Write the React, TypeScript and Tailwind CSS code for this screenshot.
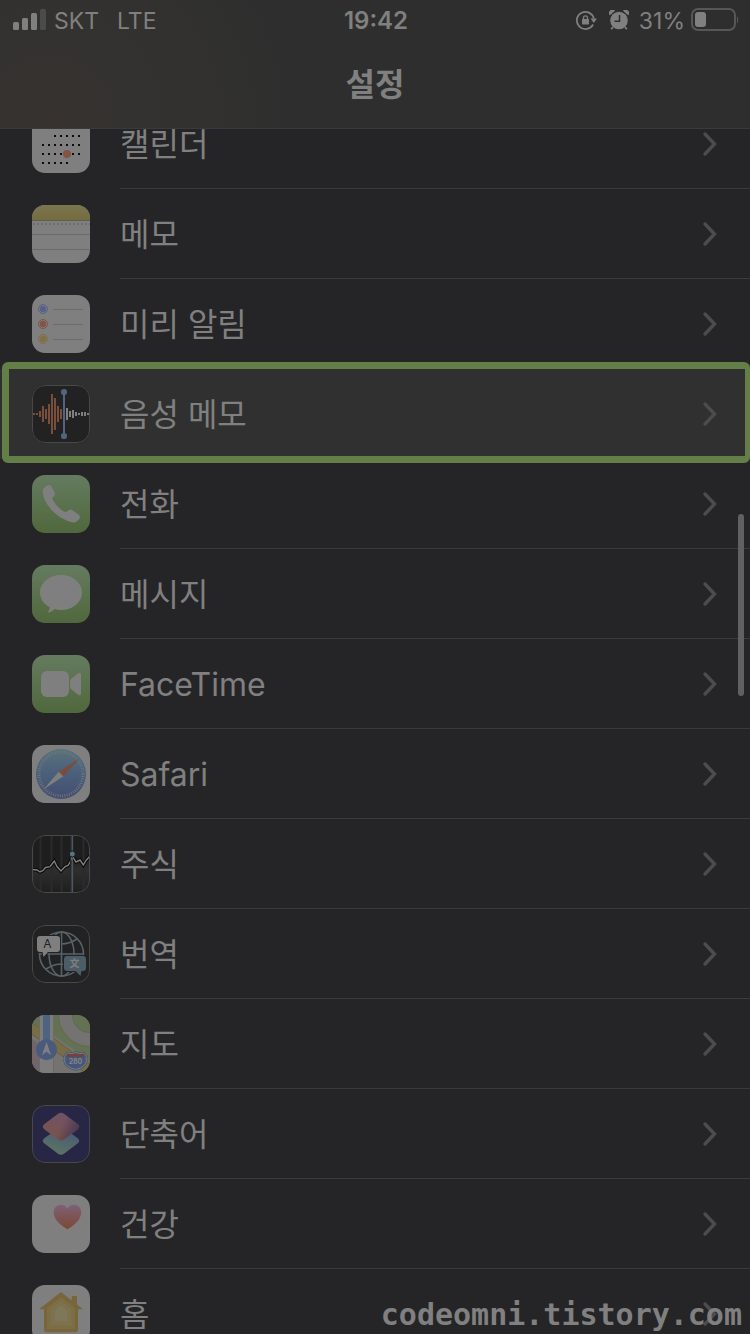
import React from "react";

interface SettingsItem {
  id: string;
  label: string;
  icon: React.ReactNode;
  highlighted?: boolean;
}

interface TileProps {
  fill: string;
  outlined?: boolean;
  children: React.ReactNode;
}

// Rounded app tile, all artwork is drawn on a 58x58 grid
const Tile = ({ fill, outlined, children }: TileProps) => (
  <svg viewBox="0 0 58 58" className="size-[58px] shrink-0 rounded-[13px]" aria-hidden="true">
    <defs>
      <linearGradient id="green" x1="0" y1="0" x2="0" y2="1">
        <stop offset="0" stopColor="#657d5f" />
        <stop offset="1" stopColor="#506b3b" />
      </linearGradient>
      <linearGradient id="greenTile" gradientUnits="userSpaceOnUse" x1="0" y1="0" x2="0" y2="58">
        <stop offset="0" stopColor="#657b60" />
        <stop offset="1" stopColor="#50683c" />
      </linearGradient>
    </defs>
    <rect width="58" height="58" fill={fill} />
    {children}
    {outlined && (
      <rect x="0.5" y="0.5" width="57" height="57" rx="12.5" fill="none" stroke="#484848" />
    )}
  </svg>
);

const CalendarIcon = () => {
  const rows = [
    { y: 21, xs: [23, 29, 35, 41, 47] },
    { y: 30, xs: [11, 17, 23, 29, 35, 41, 47] },
    { y: 39, xs: [11, 17, 23, 29, 41, 47] },
    { y: 48, xs: [11, 17, 23, 29, 35] },
  ];
  return (
    <Tile fill="#7f7f7f">
      {rows.map((row) =>
        row.xs.map((x) => (
          <rect key={`${x}-${row.y}`} x={x - 1} y={row.y - 1} width="2" height="2" fill="#0c0c0c" />
        ))
      )}
      <circle cx="35" cy="39" r="4" fill="#835442" />
    </Tile>
  );
};

const NotesIcon = () => (
  <Tile fill="#7f7f7f">
    <defs>
      <linearGradient id="notes" x1="0" y1="0" x2="0" y2="1">
        <stop offset="0" stopColor="#7a7451" />
        <stop offset="1" stopColor="#756d3e" />
      </linearGradient>
    </defs>
    <rect width="58" height="15" fill="url(#notes)" />
    <rect y="15" width="58" height="1" fill="#5f5e5a" />
    <path d="M1 19H58" stroke="#6e6e6e" strokeWidth="2" strokeDasharray="2 2" />
    <path d="M0 29.5H58M0 44.5H58" stroke="#6b6b6b" />
  </Tile>
);

const RemindersIcon = () => {
  const dots = [
    { y: 14, color: "#56628a" },
    { y: 29, color: "#805548" },
    { y: 44, color: "#807045" },
  ];
  return (
    <Tile fill="#7f7f7f">
      {dots.map((dot) => (
        <g key={dot.y}>
          <circle cx="11" cy={dot.y} r="4.5" fill="none" stroke={dot.color} />
          <circle cx="11" cy={dot.y} r="3.2" fill={dot.color} />
          <path d={`M21 ${dot.y + 0.5}H51`} stroke="#6c6c6c" />
        </g>
      ))}
    </Tile>
  );
};

const VoiceMemosIcon = () => {
  const played = [1, 1, 3, 8, 5, 10, 20, 16, 8, 5];
  const rest = [6, 3, 4, 2, 1, 2, 2, 1];
  return (
    <Tile fill="#222222" outlined>
      {played.map((h, i) => (
        <rect key={i} x={1 + i * 3} y={29 - h} width="2" height={h * 2} fill="#7b4d3b" />
      ))}
      {rest.map((h, i) => (
        <rect key={i} x={34 + i * 3} y={29 - h} width="2" height={h * 2} fill="#7f7f7f" />
      ))}
      <path d="M32 7V51" stroke="#51657e" strokeWidth="2" />
      <circle cx="32" cy="7" r="3.1" fill="#51657e" />
      <circle cx="32" cy="51" r="3.1" fill="#51657e" />
    </Tile>
  );
};

const PhoneIcon = () => (
  <Tile fill="url(#greenTile)">
    <path
      fill="#7f7f7f"
      d="M14 11.2Q17.6 8.6 19.4 11.6L22.4 17Q24 19.8 21.6 21.4Q19.6 22.8 20.8 25Q25 32.4 32 36.6Q34.4 37.8 35.6 36Q37.4 33.4 40 35L46.5 39.5Q49 41.3 47.3 43.8Q44.5 48 40.5 47.3Q30 45.5 20 35.5Q11 25.5 10.7 16.5Q10.6 13.4 14 11.2Z"
    />
  </Tile>
);

const MessagesIcon = () => (
  <Tile fill="url(#greenTile)">
    <path
      fill="#7f7f7f"
      d="M29 10C40.6 10 50 17.8 50 27.5S40.6 45 29 45C26.7 45 24.5 44.7 22.4 44.1C20.5 46.2 18.3 47.6 15.3 47.8C16.8 46.2 17.6 44.4 17.8 42.3C11.8 39.2 8 33.7 8 27.5C8 17.8 17.4 10 29 10Z"
    />
  </Tile>
);

const FaceTimeIcon = () => (
  <Tile fill="url(#greenTile)">
    <rect x="9" y="16" width="28" height="26" rx="6" fill="#7f7f7f" />
    <path
      fill="#7f7f7f"
      d="M38 26.5Q38 25 39 24L45.5 18.7Q49 16.5 49 19.5V38.5Q49 41.5 45.5 39.3L39 34Q38 33 38 31.5Z"
    />
  </Tile>
);

const SafariIcon = () => (
  <Tile fill="#7f7f7f">
    <defs>
      <linearGradient id="safari" x1="0" y1="0" x2="0" y2="1">
        <stop offset="0" stopColor="#58727b" />
        <stop offset="0.5" stopColor="#4b5f7b" />
        <stop offset="1" stopColor="#444d70" />
      </linearGradient>
    </defs>
    <circle cx="29" cy="29" r="25" fill="url(#safari)" />
    <circle
      cx="29"
      cy="29"
      r="22"
      fill="none"
      stroke="#73797c"
      strokeWidth="3"
      strokeDasharray="0.8 1.504"
    />
    <path d="M47.3 13.5L26.7 26.7L31.3 31.3Z" fill="#7c4b3a" />
    <path d="M11.5 44.5L26.7 26.7L31.3 31.3Z" fill="#7f7f7f" />
  </Tile>
);

const StocksIcon = () => (
  <Tile fill="#1e1e1e" outlined>
    <defs>
      <linearGradient id="stocks" x1="0" y1="0" x2="0" y2="1">
        <stop offset="0" stopColor="#222222" />
        <stop offset="0.4" stopColor="#2e2e2e" />
        <stop offset="1" stopColor="#1e1e1e" />
      </linearGradient>
    </defs>
    <path d="M0 35L10 36L18 32L22 26L29 36L38 28L40 21L44 27L51 30L58 21V58H0Z" fill="url(#stocks)" />
    <path d="M8.5 0V58M19.5 0V58M29.5 0V58M51.5 0V58" stroke="#2b2b2b" strokeWidth="2" />
    <path
      d="M0 34.5L5 35L8 37L11 35.5L13.5 32.5L18 31.7L20 29L22.3 26L25 31.5L29 36L33 31.7L36 30.5L38 27.5L40.3 21L44 27L48 25L51.3 30L54 25.5L58 21"
      fill="none"
      stroke="#0a0a0a"
      strokeWidth="3.5"
    />
    <path
      d="M0 34.5L5 35L8 37L11 35.5L13.5 32.5L18 31.7L20 29L22.3 26L25 31.5L29 36L33 31.7L36 30.5L38 27.5L40.3 21L44 27L48 25L51.3 30L54 25.5L58 21"
      fill="none"
      stroke="#7f7f7f"
      strokeWidth="1.4"
    />
    <path d="M38.5 0V58" stroke="#33221d" />
    <path d="M40.3 0V58" stroke="#465a66" strokeWidth="1.6" />
    <circle cx="40.3" cy="19" r="3" fill="#587383" stroke="#1c1c1c" />
  </Tile>
);

const TranslateIcon = () => (
  <Tile fill="#222222" outlined>
    <g fill="none" stroke="#56636a" strokeWidth="1.6">
      <circle cx="29.5" cy="29" r="22" />
      <ellipse cx="29.5" cy="29" rx="12.5" ry="22" />
      <path d="M29.5 7V51M7.5 29H51.5M14 14Q29.5 24 45 14M14 44Q29.5 34 45 44" />
    </g>
    <path
      d="M8 11H25Q28 11 28 14V24Q28 27 25 27H16L11.5 32L10.5 27H8Q5 27 5 24V14Q5 11 8 11Z"
      fill="#7f7f7f"
      stroke="#222222"
      strokeWidth="2"
      paintOrder="stroke"
    />
    <path
      d="M35 31H51Q54 31 54 34V43Q54 46 51 46H49.5L48.5 51L43.5 46H35Q32 46 32 43V34Q32 31 35 31Z"
      fill="#4b5d66"
      stroke="#222222"
      strokeWidth="2"
      paintOrder="stroke"
    />
    <text x="15.5" y="23.3" textAnchor="middle" fontSize="12" fontFamily="Inter, sans-serif" fill="#222222">
      A
    </text>
    <text
      x="42.5"
      y="42.3"
      textAnchor="middle"
      fontSize="10"
      fontWeight="700"
      fontFamily="'Noto Sans CJK KR', sans-serif"
      fill="#7f7f7f"
    >
      文
    </text>
  </Tile>
);

const MapsIcon = () => (
  <Tile fill="#75736f">
    <path d="M21 0H58V46L21 20Z" fill="#647253" />
    <path d="M0 0H8V16L0 10Z" fill="#647253" />
    <path d="M0 24L8 30V58H0Z" fill="#70666a" />
    <circle cx="58" cy="0" r="24.5" fill="none" stroke="#5f6a50" strokeWidth="15" />
    <circle cx="58" cy="0" r="24.5" fill="none" stroke="#757371" strokeWidth="13" />
    <path d="M-2 12L60 57" stroke="#656048" strokeWidth="10" />
    <path d="M-2 12L60 57" stroke="#776e46" strokeWidth="8.4" />
    <path d="M7.5 0H21.500V58H7.5Z" fill="#7c7c7c" />
    <path d="M7.5 0V58M21.5 0V58" stroke="#696963" strokeWidth="0.8" />
    <path d="M11 0H18V30H11Z" fill="#4d637f" />
    <circle cx="14.5" cy="34.7" r="10.5" fill="#495a7c" />
    <path d="M14.5 27L19.2 40.5L14.5 36.8L9.8 40.5Z" fill="#7f7f7f" />
    <path
      d="M35.5 38Q39.5 39.5 43.500 37.5Q47.5 39.5 51.5 38L54.5 41.5Q53.5 43 54.5 45.5Q54 52 43.5 54.5Q33 52 32.5 45.5Q33.5 43 32.5 41.5Z"
      fill="#45577a"
      stroke="#45577a"
      strokeWidth="2.600"
    />
    <path
      d="M35.5 38Q39.5 39.5 43.5 37.5Q47.5 39.5 51.5 38L54.5 41.5Q53.5 43 54.5 45.5Q54 52 43.5 54.5Q33 52 32.5 45.5Q33.5 43 32.5 41.5Z"
      fill="#45577a"
      stroke="#7f7f7f"
      strokeWidth="1"
    />
    <path d="M35.8 38.6Q39.5 40 43.5 38.2Q47.5 40 51.2 38.6L53 41.7H34Z" fill="#764238" />
    <text
      x="43.5"
      y="49.3"
      textAnchor="middle"
      fontSize="7"
      fontWeight="700"
      fontFamily="Inter, sans-serif"
      fill="#858585"
    >
      280
    </text>
  </Tile>
);

const ShortcutsIcon = () => (
  <Tile fill="#272645" outlined>
    <defs>
      <linearGradient id="layerTop" x1="0.7" y1="0" x2="0.3" y2="1">
        <stop offset="0" stopColor="#70516b" />
        <stop offset="1" stopColor="#7a5547" />
      </linearGradient>
      <linearGradient id="layerShade" x1="0.5" y1="0.5" x2="1" y2="0.7">
        <stop offset="0" stopColor="#463650" stopOpacity="0" />
        <stop offset="1" stopColor="#463650" />
      </linearGradient>
      <linearGradient id="layerBottom" x1="0.8" y1="0" x2="0.4" y2="1">
        <stop offset="0" stopColor="#465578" />
        <stop offset="1" stopColor="#5c7562" />
      </linearGradient>
    </defs>
    <path
      d="M26 23.5Q29 21 32 23.5L45.5 33Q49 35.8 45.5 38.5L32 48.7Q29 51 26 48.7L12.5 38.5Q9 35.8 12.5 33Z"
      fill="url(#layerBottom)"
    />
    <path
      d="M26 8.8Q29 6.5 32 8.8L45.5 19Q49 21.7 45.5 24.5L32 34.5Q29 36.7 26 34.5L12.5 24.5Q9 21.7 12.5 19Z"
      fill="url(#layerTop)"
    />
    <path
      d="M26 8.8Q29 6.5 32 8.8L45.5 19Q49 21.7 45.5 24.5L32 34.5Q29 36.7 26 34.5L12.5 24.5Q9 21.7 12.5 19Z"
      fill="url(#layerShade)"
    />
  </Tile>
);

const HealthIcon = () => (
  <Tile fill="#7f7f7f">
    <defs>
      <linearGradient id="heart" x1="0" y1="0" x2="0" y2="1">
        <stop offset="0" stopColor="#7e6079" />
        <stop offset="1" stopColor="#7c4831" />
      </linearGradient>
    </defs>
    <path
      fill="url(#heart)"
      d="M35.5 34.3C32 32.3 21.7 26 21.7 17.5C21.7 12.8 25 9.8 29 9.8C32 9.8 34.3 11.3 35.5 13.8C36.7 11.3 39 9.8 42 9.8C46 9.8 49.2 12.8 49.2 17.5C49.2 26 39 32.3 35.5 34.3Z"
    />
  </Tile>
);

const HomeIcon = () => (
  <Tile fill="#7f7f7f">
    <path
      fill="#79653c"
      d="M29 7L39.7 15.5V12Q39.7 11 40.7 11H44Q45 11 45 12V19.5L51 24.3H46V45Q46 47.3 43.7 47.3H14.3Q12 47.3 12 45V24.3H7Z"
    />
    <path fill="#7c6e44" d="M29 12L43 23V44H15V23Z" />
    <path fill="#7c734e" d="M29 16L39.5 24.5V40.5H18.5V24.5Z" />
    <path fill="#7e7758" d="M29 20L35.5 26V36.5H22.5V26Z" />
  </Tile>
);

const items: SettingsItem[] = [
  { id: "calendar", label: "캘린더", icon: <CalendarIcon /> },
  { id: "notes", label: "메모", icon: <NotesIcon /> },
  { id: "reminders", label: "미리 알림", icon: <RemindersIcon /> },
  { id: "voice-memos", label: "음성 메모", icon: <VoiceMemosIcon />, highlighted: true },
  { id: "phone", label: "전화", icon: <PhoneIcon /> },
  { id: "messages", label: "메시지", icon: <MessagesIcon /> },
  { id: "facetime", label: "FaceTime", icon: <FaceTimeIcon /> },
  { id: "safari", label: "Safari", icon: <SafariIcon /> },
  { id: "stocks", label: "주식", icon: <StocksIcon /> },
  { id: "translate", label: "번역", icon: <TranslateIcon /> },
  { id: "maps", label: "지도", icon: <MapsIcon /> },
  { id: "shortcuts", label: "단축어", icon: <ShortcutsIcon /> },
  { id: "health", label: "건강", icon: <HealthIcon /> },
  { id: "home", label: "홈", icon: <HomeIcon /> },
];

const StatusBar = () => (
  <div className="grid h-10 grid-cols-[1fr_auto_1fr] items-center pr-[11px] pl-[13px] text-[23px] leading-7">
    <div className="flex items-center">
      <svg viewBox="0 0 33 22" className="mr-2 h-[22px] w-[33px]" aria-hidden="true">
        <rect x="0" y="13" width="6" height="8" rx="1.5" fill="#808080" />
        <rect x="9" y="9" width="6" height="12" rx="1.5" fill="#808080" />
        <rect x="18" y="4" width="6" height="17" rx="1.5" fill="#808080" />
        <rect x="27" y="0" width="6" height="21" rx="1.5" fill="#4b4b4b" />
      </svg>
      <span className="mr-[18px] pt-0.5">SKT</span>
      <span className="pt-0.5">LTE</span>
    </div>
    <span className="pt-0.5 text-2xl leading-7 font-semibold">19:42</span>
    <div className="flex items-center justify-end">
      <svg viewBox="0 0 22 20" className="mr-3 h-5 w-[22px]" aria-hidden="true">
        <path
          d="M18 14.5A8.6 8.6 0 1 1 18.8 8.5"
          fill="none"
          stroke="#808080"
          strokeWidth="1.8"
        />
        <path d="M15.5 8.5H22L18.8 13Z" fill="#808080" />
        <rect x="7" y="9" width="7" height="5.6" rx="0.8" fill="#808080" />
        <path d="M8.5 9.5V7.8A2 2 0 0 1 12.5 7.8V9.5" fill="none" stroke="#808080" strokeWidth="1.3" />
      </svg>
      <svg viewBox="0 0 20 20" className="mr-2.5 size-5" aria-hidden="true">
        <circle cx="10" cy="10.5" r="8.8" fill="#808080" />
        <path d="M0.8 5.2A3.3 3.3 0 0 1 6 0.8ZM19.2 5.2A3.3 3.3 0 0 0 14 0.8Z" fill="#808080" />
        <path d="M4 17L2.2 19.3M16 17L17.8 19.3" stroke="#808080" strokeWidth="1.8" />
        <path d="M10.5 5V11.3H5.5" fill="none" stroke="#2e2e2e" strokeWidth="1.5" />
      </svg>
      <span className="mr-1.5 pt-0.5">31%</span>
      <svg viewBox="0 0 48 24" className="h-6 w-12" aria-hidden="true">
        <rect x="1" y="1" width="43" height="21" rx="6" fill="none" stroke="#575757" strokeWidth="2" />
        <rect x="4" y="4" width="11" height="15" rx="3" fill="#808080" />
        <path d="M46 8Q48.500 11.5 46 15.5Z" fill="#575757" />
      </svg>
    </div>
  </div>
);

const SettingsRow = ({ item }: { item: SettingsItem }) => (
  <li className={item.highlighted ? "relative bg-[#303030]" : ""}>
    <button type="button" className="flex w-full items-center pl-8 text-left">
      {item.icon}
      <span className="ml-[30px] flex h-[90px] flex-1 items-center justify-between border-b border-[#3a3a3c] pr-8">
        <span className="pt-[3px] text-[32px] leading-10">{item.label}</span>
        <svg viewBox="0 0 16 26" className="h-[26px] w-4" aria-hidden="true">
          <path
            d="M3 3L12.5 13L3 23"
            fill="none"
            stroke="#4c4c4e"
            strokeWidth="3.4"
            strokeLinecap="round"
            strokeLinejoin="miter"
          />
        </svg>
      </span>
    </button>
    {item.highlighted && (
      <div className="pointer-events-none absolute -top-[7px] right-0 -bottom-1 left-0.5 rounded-md border-7 border-r-5 border-[#637e47]" />
    )}
  </li>
);

const App = () => {
  return (
    <div className="relative flex h-screen flex-col overflow-hidden bg-[#252527] font-[Inter,'Noto_Sans_CJK_KR',sans-serif] text-[#808080]">
      <header className="relative z-10 shrink-0 border-b border-[#3a3a3c] bg-[#2e2e2e] bg-[radial-gradient(circle_at_50px_120px,#373230,#333230_100px,#2e2e2e_260px)]">
        <StatusBar />
        <h1 className="flex h-[88px] items-center justify-center pt-0.5 text-[32px] leading-10 font-bold">
          설정
        </h1>
      </header>

      <main className="min-h-0 flex-1">
        {/* The list is scrolled a little under the header */}
        <ul className="-mt-[30px]">
          {items.map((item) => (
            <SettingsRow key={item.id} item={item} />
          ))}
        </ul>
      </main>

      <div className="absolute top-[514px] right-1.5 h-[182px] w-1.5 rounded-full bg-[#606060]" />
      <p className="absolute right-2 bottom-0 font-['DejaVu_Sans_Mono',monospace] text-[30px] leading-[38px] font-bold">
        codeomni.tistory.com
      </p>
    </div>
  );
};

export default App;
